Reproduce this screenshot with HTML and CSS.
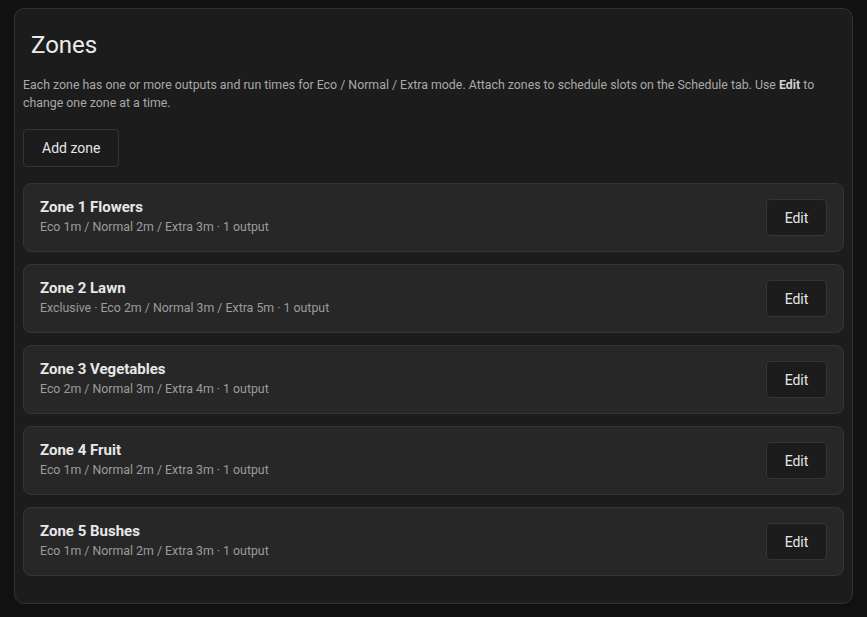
FILE: index.html
```html
<!DOCTYPE html>
<html>
<head>
<meta charset="utf-8">
<link rel="stylesheet" href="styles.css">
</head>
<body>
<div class="card">
  <h2 class="title">Zones</h2>
  <p class="desc">Each zone has one or more outputs and run times for Eco / Normal / Extra mode. Attach zones to schedule slots on the Schedule tab. Use <b>Edit</b> to change one zone at a time.</p>
  <button class="btn add">Add zone</button>
  <div class="list">
    <div class="row">
      <div class="info"><div class="name">Zone 1 Flowers</div><div class="meta">Eco 1m / Normal 2m / Extra 3m · 1 output</div></div>
      <button class="btn edit">Edit</button>
    </div>
    <div class="row">
      <div class="info"><div class="name">Zone 2 Lawn</div><div class="meta">Exclusive · Eco 2m / Normal 3m / Extra 5m · 1 output</div></div>
      <button class="btn edit">Edit</button>
    </div>
    <div class="row">
      <div class="info"><div class="name">Zone 3 Vegetables</div><div class="meta">Eco 2m / Normal 3m / Extra 4m · 1 output</div></div>
      <button class="btn edit">Edit</button>
    </div>
    <div class="row">
      <div class="info"><div class="name">Zone 4 Fruit</div><div class="meta">Eco 1m / Normal 2m / Extra 3m · 1 output</div></div>
      <button class="btn edit">Edit</button>
    </div>
    <div class="row">
      <div class="info"><div class="name">Zone 5 Bushes</div><div class="meta">Eco 1m / Normal 2m / Extra 3m · 1 output</div></div>
      <button class="btn edit">Edit</button>
    </div>
  </div>
</div>
</body>
</html>
```
FILE: styles.css
```css
* { box-sizing: border-box; }
html, body { margin: 0; background: #111111; }
body {
  padding: 8px 14px 13px;
  font-family: Roboto, "Liberation Sans", sans-serif;
  color: #e6e6e6;
}
.card {
  background: #1c1c1c;
  border: 1px solid #323232;
  border-radius: 10px;
  padding: 8px 8px 27px;
  display: flex;
  flex-direction: column;
  align-items: flex-start;
}
.title {
  margin: 14px 0 0 8px;
  font-size: 24px;
  font-weight: 400;
  line-height: 28px;
  color: #ececec;
}
.desc {
  margin: 17px 0 0;
  font-size: 12.35px;
  line-height: 18px;
  color: #a9a9a9;
}
.desc b { color: #d0d0d0; font-weight: 700; }
.btn {
  font-family: Roboto, "Liberation Sans", sans-serif;
  background: #1c1c1c;
  color: #e6e6e6;
  border: 1px solid #353535;
  border-radius: 4px;
  font-size: 14px;
  height: 38px;
  cursor: pointer;
}
.add { margin-top: 17px; padding: 0 18px; }
.list {
  margin-top: 16px;
  width: 100%;
  display: flex;
  flex-direction: column;
  gap: 12px;
}
.row {
  background: #272727;
  border: 1px solid #353535;
  border-radius: 8px;
  padding: 15px 16px;
  display: flex;
  align-items: center;
  justify-content: space-between;
}
.name {
  font-size: 15px;
  font-weight: 700;
  line-height: 16px;
  color: #e8e8e8;
}
.meta {
  margin-top: 4px;
  font-size: 12.35px;
  line-height: 17px;
  color: #9c9c9c;
}
.edit { width: 61px; height: 37px; padding: 0; }
```
